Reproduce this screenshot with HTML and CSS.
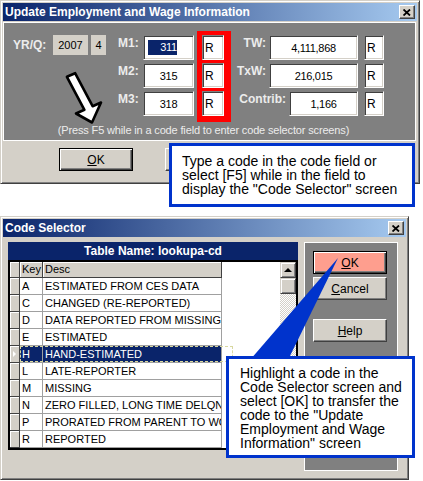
FILE: index.html
```html
<!DOCTYPE html>
<html lang="en">
<head>
<meta charset="UTF-8">
<meta name="viewport" content="width=device-width, initial-scale=1.0">
<title>Update Employment and Wage Information</title>
<link rel="stylesheet" href="styles.css">
</head>
<body>
<div class="page">

<!-- Update dialog -->
<div class="win win-update">
    <div class="titlebar">
        <span>Update Employment and Wage Information</span>
        <span class="close-btn"><svg width="8" height="7" viewBox="0 0 8 7"><path d="M0.5 0.5 L7 6.5 M7 0.5 L0.5 6.5" stroke="#000" stroke-width="1.8"/></svg></span>
    </div>
    <div class="panel">
        <div class="panel-body">
            <div class="period">
                <div class="period-row">
                    <span class="lbl yrq">YR/Q:</span>
                    <span class="flat year">2007</span>
                    <span class="flat qtr">4</span>
                </div>
                <svg class="arrow" width="46" height="58" viewBox="0 0 46 58">
                    <polygon points="15.1,5.2 32.6,38.2 41,34.5 32,54.5 16,45.5 24.4,41.8 6.9,8.8" fill="#fff" stroke="#000" stroke-width="2.6" stroke-linejoin="round"/>
                </svg>
            </div>
            <div class="months">
                <span class="lbl">M1:</span><span class="field"><span class="sel">311</span></span>
                <span class="lbl">M2:</span><span class="field">315</span>
                <span class="lbl">M3:</span><span class="field">318</span>
            </div>
            <div class="code-highlight">
                <span class="field code">R</span>
                <span class="field code">R</span>
                <span class="field code">R</span>
            </div>
            <div class="wages">
                <div class="wage-row"><span class="lbl">TW:</span><span class="field wide">4,111,868</span><span class="field code">R</span></div>
                <div class="wage-row"><span class="lbl">TxW:</span><span class="field wide">216,015</span><span class="field code">R</span></div>
                <div class="wage-row"><span class="lbl">Contrib:</span><span class="field mid">1,166</span><span class="field code">R</span></div>
            </div>
        </div>
        <div class="hint">(Press F5 while in a code field to enter code selector screens)</div>
    </div>
    <div class="actions">
        <button class="btn default"><u>O</u>K</button>
        <button class="btn"><u>C</u>ancel</button>
    </div>
</div>

<!-- Code selector dialog -->
<div class="win win-codes">
    <div class="titlebar">
        <span>Code Selector</span>
        <span class="close-btn"><svg width="8" height="7" viewBox="0 0 8 7"><path d="M0.5 0.5 L7 6.5 M7 0.5 L0.5 6.5" stroke="#000" stroke-width="1.8"/></svg></span>
    </div>
    <div class="codes-body">
        <div class="lookup">
            <div class="lookup-head">Table Name: lookupa-cd</div>
            <div class="grid">
                <div class="rows">
                    <div class="row head"><span class="rs"></span><span class="k">Key</span><span class="d">Desc</span></div>
                    <div class="row"><span class="rs"></span><span class="k">A</span><span class="d">ESTIMATED FROM CES DATA</span></div>
                    <div class="row"><span class="rs"></span><span class="k">C</span><span class="d">CHANGED (RE-REPORTED)</span></div>
                    <div class="row"><span class="rs"></span><span class="k">D</span><span class="d">DATA REPORTED FROM MISSING</span></div>
                    <div class="row"><span class="rs"></span><span class="k">E</span><span class="d">ESTIMATED</span></div>
                    <div class="row cur"><span class="rs"></span><span class="k">H</span><span class="d">HAND-ESTIMATED</span></div>
                    <div class="row"><span class="rs"></span><span class="k">L</span><span class="d">LATE-REPORTER</span></div>
                    <div class="row"><span class="rs"></span><span class="k">M</span><span class="d">MISSING</span></div>
                    <div class="row"><span class="rs"></span><span class="k">N</span><span class="d">ZERO FILLED, LONG TIME DELQNT</span></div>
                    <div class="row"><span class="rs"></span><span class="k">P</span><span class="d">PRORATED FROM PARENT TO WORKSITE</span></div>
                    <div class="row"><span class="rs"></span><span class="k">R</span><span class="d">REPORTED</span></div>
                </div>
                <div class="scrollbar">
                    <span class="sb-btn sb-up"></span>
                    <span class="sb-btn"></span>
                    <span class="sb-track"></span>
                </div>
            </div>
        </div>
        <div class="side">
            <button class="btn default hot"><u>O</u>K</button>
            <button class="btn"><u>C</u>ancel</button>
            <button class="btn help"><u>H</u>elp</button>
        </div>
    </div>
</div>

<div class="callout callout-type">
    Type a code in the code field or<br>
    select [F5] while in the field to<br>
    display the "Code Selector" screen
</div>

<svg class="pointer" width="423" height="481">
    <polygon points="338,258 250,360 288,360" fill="#0033cc"/>
</svg>

<div class="callout callout-pick">
    Highlight a code in the<br>
    Code Selector screen and<br>
    select [OK] to transfer the<br>
    code to the "Update<br>
    Employment and Wage<br>
    Information" screen
</div>

</div>
</body>
</html>
```

FILE: styles.css
```css
body {
    margin: 0;
    background: #fff;
    font-family: "Liberation Sans", Arial, sans-serif;
}
.page {
    position: relative;
    width: 423px;
    height: 481px;
    overflow: hidden;
}

/* windows */
.win {
    box-sizing: border-box;
    background: #d4d0c8;
    border: 1px solid;
    border-color: #d4d0c8 #404040 #404040 #d4d0c8;
    box-shadow: inset 1px 1px #fff, inset -1px -1px #808080;
    padding: 2px;
}
.win-update {
    width: 420px;
    height: 184px;
}
.win-codes {
    width: 409px;
    height: 264px;
    margin-top: 32px;
}
.titlebar {
    display: flex;
    align-items: center;
    justify-content: space-between;
    height: 18px;
    padding: 0 2px 0 2px;
    background: linear-gradient(to right, #0a246a, #a6caf0);
    color: #fff;
    font-weight: bold;
    font-size: 12px;
}
.close-btn {
    box-sizing: border-box;
    width: 16px;
    height: 14px;
    display: flex;
    align-items: center;
    justify-content: center;
    background: #d4d0c8;
    border: 1px solid;
    border-color: #fff #404040 #404040 #fff;
    box-shadow: inset -1px -1px #808080;
}

/* update panel */
.panel {
    box-sizing: border-box;
    height: 119px;
    margin: 1px 1px 0 0;
    border: 1px solid #fff;
    background: #808080;
    padding: 8px 0 0 9px;
}
.panel-body {
    display: flex;
    align-items: flex-start;
    height: 91px;
}
.lbl {
    color: #ececec;
    font-weight: bold;
    font-size: 12px;
    line-height: 16px;
    white-space: nowrap;
}
.period {
    width: 93px;
    margin-top: 4px;
}
.period-row {
    display: flex;
    align-items: center;
    height: 20px;
}
.yrq {
    width: 40px;
}
.flat {
    height: 20px;
    display: flex;
    align-items: center;
    justify-content: center;
    background: #d4d0c8;
    font-size: 11px;
}
.year {
    width: 35px;
}
.qtr {
    width: 15px;
    margin-left: 3px;
}
.arrow {
    display: block;
    margin: 13px 0 0 47px;
    overflow: visible;
}
.months {
    display: grid;
    grid-template-columns: 25px 51px;
    grid-auto-rows: 25px;
    row-gap: 3px;
    margin: 4px 0 0 12px;
}
.field {
    box-sizing: border-box;
    height: 25px;
    display: flex;
    align-items: center;
    justify-content: center;
    background: #fff;
    border: 1px solid;
    border-color: #808080 #fff #fff #808080;
    box-shadow: inset 1px 1px #404040, inset -1px -1px #d4d0c8;
    font-size: 11px;
    letter-spacing: -0.3px;
    color: #000;
}
.sel {
    background: #0a246a;
    color: #fff;
    line-height: 13px;
    padding: 1px 0 1px 12px;
    margin-left: -12px;
}
.field.code {
    width: 22px;
    justify-content: flex-start;
    padding-left: 2px;
    font-size: 12px;
    letter-spacing: 0;
}
.code-highlight {
    box-sizing: border-box;
    width: 34px;
    height: 91px;
    margin-left: 3px;
    padding: 4px 7px 6px 5px;
    background: #ff0000;
    display: grid;
    grid-auto-rows: 25px;
    row-gap: 3px;
}
.wages {
    width: 153px;
    margin-top: 4px;
    display: grid;
    row-gap: 3px;
}
.wage-row {
    display: flex;
    justify-content: flex-end;
    align-items: flex-start;
    height: 25px;
}
.wage-row .lbl {
    margin-right: 3px;
}
.field.wide {
    width: 89px;
}
.field.mid {
    width: 69px;
}
.wage-row .field.code {
    width: 20px;
    margin-left: 6px;
}
.hint {
    margin: 2px 0 0 -9px;
    padding-right: 12px;
    text-align: center;
    color: #ececec;
    font-size: 11px;
    line-height: 13px;
    letter-spacing: -0.15px;
    white-space: nowrap;
}
.actions {
    display: flex;
    gap: 32px;
    padding-left: 56px;
    margin-top: 7px;
}

/* buttons */
.btn {
    box-sizing: border-box;
    width: 74px;
    height: 23px;
    padding: 0;
    background: #d4d0c8;
    border: 1px solid;
    border-color: #fff #404040 #404040 #fff;
    box-shadow: inset -1px -1px #808080;
    font-family: "Liberation Sans", Arial, sans-serif;
    font-size: 12px;
    color: #000;
}
.btn.default {
    border-color: #000;
    box-shadow: inset 1px 1px #fff, inset -1px -1px #404040, inset -2px -2px #808080;
}
.btn.hot {
    background: #fe9e8e;
}

/* code selector */
.codes-body {
    display: flex;
    align-items: flex-start;
    padding: 5px 0 0 5px;
}
.lookup {
    width: 290px;
}
.lookup-head {
    height: 18px;
    background: #0a246a;
    color: #fff;
    font-weight: bold;
    font-size: 12px;
    line-height: 18px;
    text-align: center;
}
.grid {
    box-sizing: border-box;
    height: 190px;
    display: flex;
    border: 2px solid #000;
    background: #fff;
}
.rows {
    width: 270px;
}
.row {
    position: relative;
    display: flex;
    height: 17px;
    font-size: 11px;
    line-height: 16px;
    color: #000;
}
.row.head {
    height: 16px;
    line-height: 15px;
}
.rs {
    position: relative;
    box-sizing: border-box;
    width: 10px;
    background: #d4d0c8;
    border-right: 1px solid #404040;
    border-bottom: 1px solid #404040;
    box-shadow: inset 1px 1px #fff;
}
.k, .d {
    box-sizing: border-box;
    padding-left: 2px;
    border-right: 1px solid #a0a0a0;
    border-bottom: 1px solid #a0a0a0;
    white-space: nowrap;
    overflow: hidden;
}
.k {
    width: 23px;
}
.d {
    width: 179px;
}
.head .k, .head .d {
    background: #d4d0c8;
    border-color: #404040;
    box-shadow: inset 1px 1px #fff;
}
.cur .k, .cur .d {
    background: #0a246a;
    color: #fff;
}
.cur::after {
    content: "";
    position: absolute;
    left: 10px;
    top: 0;
    width: 213px;
    height: 16px;
    box-sizing: border-box;
    border: 1px dashed #d8d8a0;
}
.cur .rs::after {
    content: "";
    position: absolute;
    left: 3px;
    top: 5px;
    border-left: 3px solid #fff;
    border-top: 3px solid transparent;
    border-bottom: 3px solid transparent;
}
.scrollbar {
    width: 16px;
    display: flex;
    flex-direction: column;
}
.sb-btn {
    box-sizing: border-box;
    height: 16px;
    display: flex;
    align-items: center;
    justify-content: center;
    background: #d4d0c8;
    border: 1px solid;
    border-color: #d4d0c8 #404040 #404040 #d4d0c8;
    box-shadow: inset 1px 1px #fff, inset -1px -1px #808080;
}
.sb-up::before {
    content: "";
    border-left: 4px solid transparent;
    border-right: 4px solid transparent;
    border-bottom: 4px solid #000;
}
.sb-track {
    flex: 1;
    background: repeating-conic-gradient(#d4d0c8 0 25%, #fff 0 50%) 0 0 / 2px 2px;
}
.side {
    box-sizing: border-box;
    width: 94px;
    height: 229px;
    margin-left: 6px;
    padding: 8px 0 0 8px;
    border: 1px solid #fff;
    background: #808080;
    display: flex;
    flex-direction: column;
    gap: 3px;
}
.side .help {
    margin-top: 16px;
}

/* callouts */
.callout {
    position: absolute;
    box-sizing: border-box;
    background: #fff;
    border: 3px solid #0033cc;
    font-size: 14px;
    line-height: 14px;
    color: #000;
    white-space: nowrap;
}
.callout-type {
    left: 169px;
    top: 143px;
    width: 246px;
    height: 64px;
    padding: 8px 0 0 10px;
}
.callout-pick {
    left: 226px;
    top: 356px;
    width: 189px;
    height: 102px;
    padding: 7px 0 0 11px;
}
.pointer {
    position: absolute;
    left: 0;
    top: 0;
    pointer-events: none;
}
```
